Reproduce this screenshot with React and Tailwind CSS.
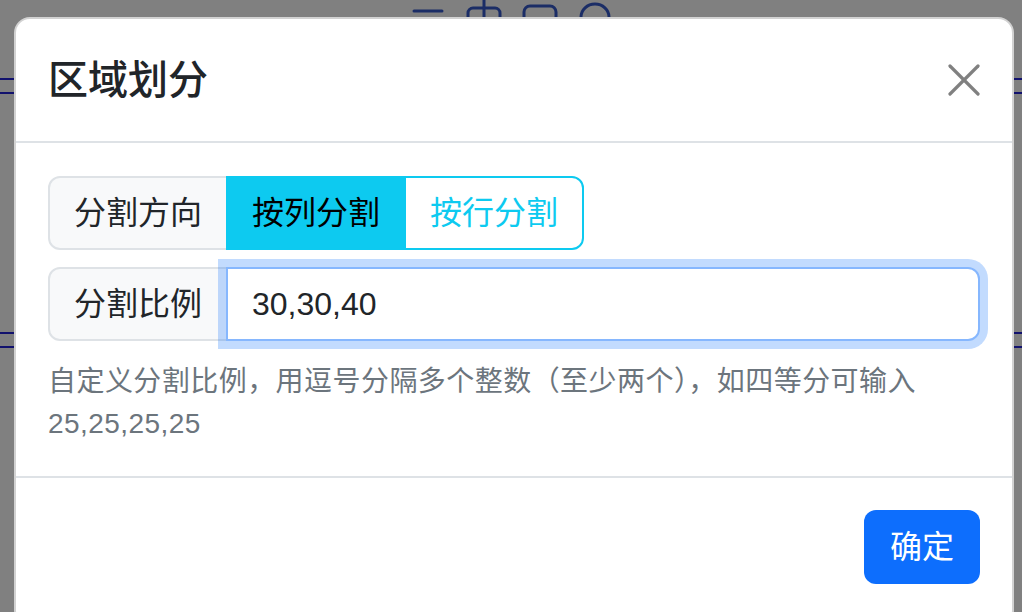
import React, { useState } from "react";

const FONT = { fontFamily: '"Liberation Sans", "Noto Sans CJK SC", sans-serif' };

function BackgroundPage() {
  return (
    <div className="flex flex-col">
      {/* toolbar icons peeking above the modal */}
      <div className="flex h-[78px] justify-center pl-[4px]">
        <svg width="230" height="30" viewBox="0 0 230 30" fill="none" stroke="#1b2d66" strokeWidth="3" strokeLinecap="round">
          <line x1="16" y1="11" x2="44" y2="11" />
          <rect x="70" y="8" width="32" height="26" rx="5" />
          <line x1="86" y1="-2" x2="86" y2="30" />
          <rect x="126" y="6" width="32" height="30" rx="6" />
          <ellipse cx="197" cy="17" rx="14" ry="13" />
        </svg>
      </div>
      <div className="h-[2px] bg-[#12126e]" />
      <div className="mt-[12px] h-[2px] bg-[#12126e]" />
      <div className="mt-[238px] h-[2px] bg-[#12126e]" />
      <div className="mt-[12px] h-[2px] bg-[#12126e]" />
    </div>
  );
}

export default function App() {
  const [direction, setDirection] = useState("col");
  const [ratio, setRatio] = useState("30,30,40");

  return (
    <div className="relative h-[612px] w-[1022px] overflow-hidden bg-[#808080]" style={FONT}>
      <BackgroundPage />

      <div className="absolute left-[14px] top-[17px] w-[1000px] rounded-[16px] border-2 border-[rgba(0,0,0,0.175)] bg-white">
        <div className="flex h-[124px] items-center justify-between border-b-2 border-[#dee2e6] px-[32px]">
          <h5 className="text-[40px] font-medium leading-[60px] text-[#212529]">区域划分</h5>
          <button className="flex h-[32px] w-[32px] items-center justify-center text-[#808080]">
            <svg width="32" height="32" viewBox="0 0 32 32" fill="none" stroke="currentColor" strokeWidth="3.2" strokeLinecap="round">
              <line x1="2" y1="2" x2="30" y2="30" />
              <line x1="30" y1="2" x2="2" y2="30" />
            </svg>
          </button>
        </div>

        <div className="px-[32px] pb-[31px] pt-[33px]">
          <div className="flex h-[74px] text-[32px] leading-[48px]">
            <span className="flex shrink-0 items-center whitespace-nowrap rounded-l-[12px] border-2 border-[#dee2e6] bg-[#f8f9fa] px-[24px] text-[#212529]">
              分割方向
            </span>
            <button
              onClick={() => setDirection("col")}
              className={
                direction === "col"
                  ? "-ml-[2px] flex shrink-0 items-center whitespace-nowrap border-2 border-[#0dcaf0] bg-[#0dcaf0] px-[24px] text-black"
                  : "-ml-[2px] flex shrink-0 items-center whitespace-nowrap border-2 border-[#0dcaf0] bg-white px-[24px] text-[#0dcaf0]"
              }
            >
              按列分割
            </button>
            <button
              onClick={() => setDirection("row")}
              className={
                direction === "row"
                  ? "-ml-[2px] flex shrink-0 items-center whitespace-nowrap rounded-r-[12px] border-2 border-[#0dcaf0] bg-[#0dcaf0] px-[24px] text-black"
                  : "-ml-[2px] flex shrink-0 items-center whitespace-nowrap rounded-r-[12px] border-2 border-[#0dcaf0] bg-white px-[24px] text-[#0dcaf0]"
              }
            >
              按行分割
            </button>
          </div>

          <div className="mt-[17px] flex h-[74px] text-[32px] leading-[48px]">
            <span className="flex shrink-0 items-center whitespace-nowrap rounded-l-[12px] border-2 border-[#dee2e6] bg-[#f8f9fa] px-[24px] text-[#212529]">
              分割比例
            </span>
            <input
              autoFocus
              value={ratio}
              onChange={(e) => setRatio(e.target.value)}
              className="-ml-[2px] min-w-0 flex-1 rounded-r-[12px] border-2 border-[#86b7fe] bg-white px-[24px] text-[#212529] caret-black shadow-[0_0_0_8px_rgba(13,110,253,0.25)] outline-none"
            />
          </div>

          <div className="mt-[20px] text-[28px] leading-[42px] tracking-[0.45px] text-[#6c757d]">
            自定义分割比例，用逗号分隔多个整数（至少两个），如四等分可输入
            <br />
            25,25,25,25
          </div>
        </div>

        <div className="flex justify-end border-t-2 border-[#dee2e6] px-[24px] pb-[32px] pt-[24px]">
          <button className="m-[8px] h-[74px] rounded-[12px] bg-[#0d6efd] px-[26px] text-[32px] leading-[48px] text-white">
            确定
          </button>
        </div>
      </div>
    </div>
  );
}
